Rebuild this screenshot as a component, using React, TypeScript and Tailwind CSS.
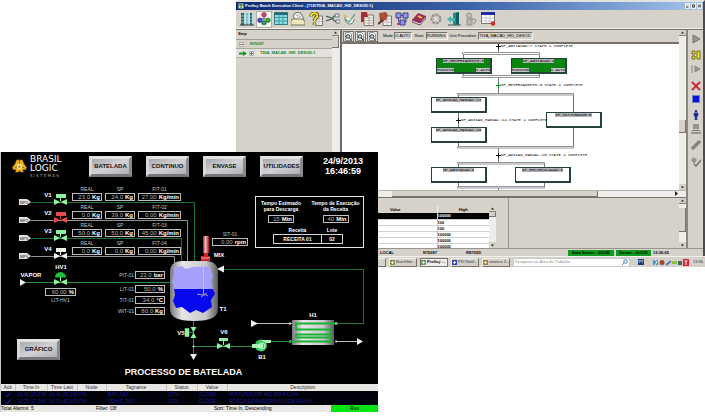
import { ReactNode } from "react";
import clsx from "clsx";

const GREEN = "#25923f";
const LIGHT_GREEN = "#8df2a0";

export default function App(): JSX.Element {
  return (
    <main className="relative min-h-screen overflow-hidden bg-white font-['Liberation_Sans',sans-serif]">
      <BatchClientWindow />
      <ProcessWindow />
    </main>
  );
}

/* ---------- Batch execution client ---------- */

function BatchClientWindow(): JSX.Element {
  return (
    <section className="absolute left-[236px] right-0 top-0 text-[4px] leading-[6px] text-black">
      <div className="border-r-2 border-t-2 border-[#4c4c50] border-t-[#e4e2de] bg-[#d6d2ca]">
        <header className="flex h-[8px] items-center justify-between bg-linear-to-r from-[#0c2a72] via-[#3c62a8] to-[#a4c4ea] pl-[2px]">
          <h1 className="flex items-center gap-[1px] font-bold text-white">
            <svg className="h-[6px] w-[6px]" viewBox="0 0 6 6">
              <rect width="5" height="5" x="0.5" y="0.5" fill="#d8e0a0" />
              <path d="M1 2h4M3 1v4" stroke="#286848" />
            </svg>
            Proficy Batch Execution Client - [718\TDIA_MACAD_HID_DESOD:1]
          </h1>
          <div className="flex gap-[1px] pr-[1px]">
            {["Minimize", "Restore", "Close"].map((label, i) => (
              <button
                key={label}
                aria-label={label}
                className="h-[6px] w-[5px] border border-[#f0eeea] bg-[#d6d2ca]"
              >
                <svg className="block h-[4px] w-[3px]" viewBox="0 0 4 4">
                  <path
                    d={["M0 3.5h3", "M.5.5h3v3h-3z", "M0 0l4 4M4 0L0 4"][i]}
                    fill="none"
                    stroke="#222"
                  />
                </svg>
              </button>
            ))}
          </div>
        </header>
        <Toolbar />
        <div className="flex border-t border-[#77736c]">
          <div className="min-w-0 flex-1">
            <div className="flex h-[167px]">
              <StepTree />
              <div className="flex min-w-0 flex-1 flex-col border-l-2 border-[#6d6a65]">
                <div className="flex min-h-0 flex-1">
                  <div className="flex min-w-0 flex-1 flex-col">
                    <ModeBar />
                    <SequenceChart />
                  </div>
                  <ScrollBar thumb="mt-[84px] h-[13px]" />
                </div>
                <div className="flex h-[7px] border-t border-[#b7b3ac] bg-[#efede9]">
                  <div className="ml-[50px] w-[206px] border-b border-r border-[#77736c] bg-[#d6d2ca]" />
                  <span className="ml-auto mr-[7px]">
                    <Arrow d="M1 0l3 2.5L1 5z" />
                  </span>
                </div>
              </div>
            </div>
            <ParameterPane />
          </div>
          <SideBar />
        </div>
        <footer className="flex h-[8px] items-center border-t border-[#9a968f] pl-[144px] font-bold">
          <span className="w-[43px]">LOCAL</span>
          <span className="w-[43px]">N70097</span>
          <span className="w-[43px]">RE705D</span>
          <div className="ml-auto mr-[34px] flex gap-[2px]">
            <span className="w-[46px] bg-[#129a22] text-center">
              Data Server - GOOD
            </span>
            <span className="w-[35px] bg-[#129a22] text-center">
              Server - GOOD
            </span>
            <span>13:36:05</span>
          </div>
        </footer>
      </div>
      <TaskBar />
    </section>
  );
}

const TOOLS: { name: string; icon: ReactNode }[] = [
  {
    name: "Batch list",
    icon: (
      <>
        <path d="M1 1h12v12H1z" fill="#b4dde0" />
        <path d="M1 1h3v12H1zM10 1h2v12h-2z" fill="#2a6670" />
        <path d="M6.500 1h1v12h-1z" fill="#4f949c" />
        <path d="M1 4h12M1 7h12M1 10h12" stroke="#bfe8ec" strokeWidth=".7" />
        <path d="M0 13h14" stroke="#333" />
      </>
    ),
  },
  {
    name: "Sequence view",
    icon: (
      <>
        <path d="M7 4v4M3 8l4-2 4 2" fill="none" stroke="#555" strokeWidth=".8" />
        <path d="M7 0l2.500 1.200v3L7 5.500 4.500 4.200v-3z" fill="#c2306e" />
        <path d="M3 5.500l2.500 1.300v3L3 11 .5 9.800v-3z" fill="#3540b8" />
        <path d="M11 5.500l2.500 1.300v3L11 11 8.500 9.800v-3z" fill="#27963a" />
        <path d="M7 8l2.500 1.300v3L7 13.500l-2.500-1.200v-3z" fill="#2d8050" />
        <path d="M7 1.500v2M3 7v2M11 7v2M7 9.500v2" stroke="#fff" strokeWidth=".6" opacity=".5" />
      </>
    ),
  },
  {
    name: "Table view",
    icon: (
      <>
        <path d="M.5.500h13v12H.5z" fill="#8fdce2" stroke="#2c7d86" />
        <path d="M.5 2h13" stroke="#1c6872" strokeWidth="2" />
        <path d="M5 2v10M9 2v10M1 5.500h12M1 9h12" stroke="#3d9aa2" />
      </>
    ),
  },
  {
    name: "Event journal",
    icon: (
      <>
        <path d="M4 1l5-1 4 7-8 2-3-5z" fill="#f6f6f2" stroke="#666" />
        <path d="M5 3.500l4-1M6 5.500l4-1" stroke="#888" strokeWidth=".7" />
        <path d="M0 8l2-1h9l3 2v4H0z" fill="#ede9bd" stroke="#77735a" />
      </>
    ),
  },
  {
    name: "Prompts",
    icon: (
      <>
        <path d="M6 4h7.500v9.500H6z" fill="#f5f5f5" stroke="#777" />
        <path d="M7 7h6M7 9.500h6M10 4v9" stroke="#aaa" strokeWidth=".7" />
        <path
          d="M2 4.500C2 0 9 .5 8.500 4 8 6 5.500 6 5.500 9M5.500 10.500v2.500"
          fill="none"
          stroke="#3c3a12"
          strokeWidth="3.500"
        />
        <path
          d="M2 4.500C2 0 9 .5 8.500 4 8 6 5.500 6 5.500 9M5.500 10.500v2.500"
          fill="none"
          stroke="#f2e32e"
          strokeWidth="2"
        />
      </>
    ),
  },
  {
    name: "Bindings",
    icon: (
      <>
        <path d="M0 4l6 2 5-4M0 9l6-2 6 4" fill="none" stroke="#4a5a58" strokeWidth="1.300" />
        <path d="M9 2h4v3H9zM10 8h4v3h-4z" fill="#e8eeee" stroke="#546462" strokeWidth=".8" />
        <path d="M5 5h3v3H5z" fill="#5d7f78" />
      </>
    ),
  },
  {
    name: "Signatures",
    icon: (
      <>
        <path d="M2 5c0 9 9 9 9 2" fill="#e9efe8" stroke="#5b7b6c" />
        <path d="M2 7l4 3 6-8" fill="none" stroke="#58977c" strokeWidth="1.200" />
        <path d="M1 3l3 2" stroke="#e0b638" strokeWidth="1.500" />
      </>
    ),
  },
  {
    name: "Alarm report",
    icon: (
      <>
        <path d="M4 3h9.500v10.500H4z" fill="#f7f4f2" stroke="#8f6f6f" />
        <path d="M5 6h8M5 8.500h8M5 11h8M9 4v9" stroke="#b39a9a" strokeWidth=".8" />
        <path d="M1 0h6l1 5H4v5H1z" fill="#a42d36" />
      </>
    ),
  },
  {
    name: "Unit report",
    icon: (
      <>
        <path d="M5 4h8.500v9.500H5z" fill="#f7f4f2" stroke="#777" />
        <path d="M6 7h7M6 10h7M9 5v8" stroke="#aaa" strokeWidth=".8" />
        <path d="M1 1l7-1 2 3-2 5-6 2z" fill="#aa5034" />
        <path d="M0 12l5-4" stroke="#5a2f26" strokeWidth="2" />
      </>
    ),
  },
  {
    name: "Arbitration",
    icon: (
      <>
        <path d="M1 1h5v5H1zM8 1h5v5H8zM5 8h5v5H5z" fill="#8b9ae4" stroke="#4b3a86" />
        <path d="M3.500 6v4H6M11 6v4H9M6 3.500h2" fill="none" stroke="#4b3a86" />
        <path d="M2 12h3" stroke="#b83b52" strokeWidth="2" />
      </>
    ),
  },
  {
    name: "Help",
    icon: (
      <>
        <path d="M0 8l6-7 8 3-6 7z" fill="#a22857" />
        <path d="M0 8v2l8 3 6-7V4l-6 7z" fill="#f0e6ea" stroke="#571b40" strokeWidth=".8" />
        <path d="M6 4l4 2" stroke="#eed94c" strokeWidth="1.500" />
      </>
    ),
  },
  {
    name: "Clear failures",
    icon: (
      <>
        <circle cx="7" cy="7" r="4.500" fill="#c5c1ba" stroke="#94918b" strokeWidth="2" strokeDasharray="3 1" />
        <path d="M5 5l4 4M9 5L5 9" stroke="#eee" />
      </>
    ),
  },
  {
    name: "Exit",
    icon: (
      <>
        <path d="M6 1l6-1v13H6z" fill="#238b8b" />
        <path d="M9 1l3-1v13l-3-2z" fill="#115d66" />
        <path d="M0 7l4-3v2h4v3H4v2z" fill="#48b8ac" />
        <path d="M1 13h13" stroke="#3b5658" />
      </>
    ),
  },
  {
    name: "Acquire",
    icon: (
      <>
        <circle cx="5" cy="3.500" r="2.500" fill="#c5c1ba" stroke="#918d87" />
        <path d="M3 7h5v6H3z" fill="#bbb7b0" stroke="#918d87" />
        <path d="M7 6l5 2-2 4" fill="none" stroke="#918d87" />
      </>
    ),
  },
  {
    name: "Active steps",
    icon: (
      <>
        <path d="M.5.500h13v11H.5z" fill="#fff" stroke="#777" />
        <path d="M0 0h14v3H0z" fill="#1e2aa6" />
        <path d="M1 6h12M1 9h12M5 3v8M9 3v8" stroke="#bbb" strokeWidth=".8" />
        <circle cx="12" cy="11.500" r="2.300" fill="#e0252c" />
      </>
    ),
  },
];

function Toolbar(): JSX.Element {
  return (
    <nav className="flex h-[19px] items-center gap-[1px] border-b border-[#f4f2ee] pl-[3px]">
      {TOOLS.map((tool, i) => (
        <button
          key={tool.name}
          aria-label={tool.name}
          className={clsx(
            "flex h-[17px] w-[16px] shrink-0 items-center justify-center",
            i === 1 && "border border-[#b3afa8] bg-[#f5f4f1]",
            i % 4 === 3 && "mr-[1px]"
          )}
        >
          <svg className="h-[14px] w-[14px] shrink-0" viewBox="0 0 14 14">
            {tool.icon}
          </svg>
        </button>
      ))}
    </nav>
  );
}

function Arrow({ d }: { d: string }): JSX.Element {
  return (
    <svg className="block h-[5px] w-[5px]" viewBox="0 0 5 5">
      <path d={d} fill="#222" />
    </svg>
  );
}

function ScrollBar({ thumb }: { thumb: string }): JSX.Element {
  return (
    <div className="flex w-[7px] shrink-0 flex-col items-center justify-between bg-[#efede9]">
      <div className="flex w-full flex-col items-center">
        <div className="flex h-[6px] w-full items-center justify-center border-b border-[#8b8780] bg-[#d6d2ca]">
          <Arrow d="M1 3.500l1.500-2L4 3.500z" />
        </div>
        <div
          className={clsx(
            "w-full border-b border-r border-[#77736c] bg-[#d6d2ca]",
            thumb
          )}
        />
      </div>
      <div className="flex h-[6px] w-full items-center justify-center bg-[#d6d2ca]">
        <Arrow d="M1 1.500h3l-1.500 2z" />
      </div>
    </div>
  );
}

function StepTree(): JSX.Element {
  return (
    <div className="flex w-[104px] shrink-0 border-r border-[#efede9]">
      <div className="min-w-0 flex-1 whitespace-nowrap font-bold text-[#15811d]">
        <div className="h-[10px] border-b border-[#a09c95] pl-[2px] pt-[1px] text-black">
          Step
        </div>
        <div className="flex h-[9px] items-center border-b border-[#aaa69f] pl-[3px]">
          <TreeToggle open />
          <span className="pl-[6px]">N70097</span>
        </div>
        <div className="flex h-[9px] items-center border-b border-[#b7b3ac] bg-[#e4e2dd] pl-[3px]">
          <svg className="h-[5px] w-[8px]" viewBox="0 0 8 5">
            <path d="M0 1.500h4V0l4 2.500L4 5V3.500H0z" fill="#15962a" />
          </svg>
          <span className="pl-[2px]">
            <TreeToggle />
          </span>
          <span className="pl-[6px]">TDIA_MACAD_HID_DESOD:1</span>
        </div>
      </div>
      <ScrollBar thumb="h-[12px]" />
    </div>
  );
}

function TreeToggle({ open }: { open?: boolean }): JSX.Element {
  return (
    <svg className="h-[5px] w-[5px]" viewBox="0 0 5 5">
      <path d="M.5.500h4v4h-4z" fill="#f4f2ee" stroke="#9a968f" strokeWidth=".7" />
      <path d={open ? "M1 2.500h3" : "M1 2.500h3M2.500 1v3"} stroke="#444" strokeWidth=".7" />
    </svg>
  );
}

function ModeBar(): JSX.Element {
  return (
    <div className="flex h-[14px] shrink-0 items-center whitespace-nowrap border-b-2 border-[#77736c] pl-[1px]">
      {["Zoom in", "Zoom out", "Zoom fit"].map((label) => (
        <button
          key={label}
          aria-label={label}
          className="mr-[1px] h-[11px] w-[11px] border border-[#77736c] bg-[#e4e2dd]"
        >
          <svg className="block h-[9px] w-[9px]" viewBox="0 0 8 9">
            <path d="M1 .5h4l2 2v6H1z" fill="#fff" stroke="#777" strokeWidth=".8" />
            <circle cx="3.500" cy="4.500" r="1.800" fill="#b8dce4" stroke="#222" strokeWidth=".9" />
            <path d="M5 6l2 2.500" stroke="#222" />
          </svg>
        </button>
      ))}
      <span className="ml-[4px] w-[11px]">Mode</span>
      <Readout>O-AUTO</Readout>
      <span className="mx-[2px]">State</span>
      <Readout>RUNNING</Readout>
      <span className="mx-[2px]">Unit Procedure</span>
      <Readout>TDIA_MACAD_HID_DESOD</Readout>
    </div>
  );
}

function Readout({ children }: { children: ReactNode }): JSX.Element {
  return (
    <span className="border border-b-[#f4f2ee] border-l-[#77736c] border-r-[#f4f2ee] border-t-[#77736c] pr-[1px]">
      {children}
    </span>
  );
}

const OPERATIONS = [
  { name: "OP_RESFRIAMENTO:3", x: 94, y: 14, running: true },
  { name: "OP_AGITACAO:4", x: 169, y: 14, running: true },
  { name: "OP_ADICAO_MANUAL:14", x: 89, y: 53 },
  { name: "OP_MISTURADOR:5", x: 204, y: 68 },
  { name: "OP_ADICAO_MANUAL:15", x: 89, y: 83 },
  { name: "OP_AGITACAO:8", x: 89, y: 123 },
  { name: "OP_RECIRCULACAO:6", x: 173, y: 123 },
];

const TRANSITIONS = [
  { text: "OP_AGITACAO:7.STATE = COMPLETE", x: 156, y: 2 },
  { text: "OP_RESFRIAMENTO:3.STATE = COMPLETE", x: 156, y: 41, active: true },
  { text: "OP_ADICAO_MANUAL:14.STATE = COMPLETE", x: 116, y: 76 },
  { text: "OP_ADICAO_MANUAL:15.STATE = COMPLETE", x: 156, y: 111 },
];

function SequenceChart(): JSX.Element {
  return (
    <div className="relative min-h-0 flex-1 overflow-hidden bg-white font-['Liberation_Mono',monospace] leading-[4px]">
      <svg className="absolute left-0 top-0 h-[146px] w-[336px]" viewBox="0 0 336 146">
        <path
          d="M156.500 0v8M121.500 11v23M197.500 11v23M156.500 34v16M116.500 50v53M231.500 50v53M156.500 103v16M116.500 119v24M202.500 119v24M156.500 143v3"
          stroke="#77777b"
        />
        <g fill="#fff" stroke="#96969a">
          <path d="M120.500 8.500h77v2h-77zM120.500 31.500h77v2h-77z" />
          <path d="M115.500 49.500h116v1.500h-116zM115.500 102.500h116v1.500h-116z" />
          <path d="M115.500 118.500h87v1.500h-87zM115.500 142.500h87v1.500h-87z" />
        </g>
        {TRANSITIONS.map((t) => (
          <path
            key={t.text}
            d={`M${t.x - 2} ${t.y + 0.5}h5M${t.x + 0.5} ${t.y - 2}v5`}
            stroke={t.active ? "#0f8c23" : "#111"}
          />
        ))}
      </svg>
      {OPERATIONS.map((op) => (
        <div
          key={op.name}
          className={clsx(
            "absolute flex h-[16px] w-[56px] flex-col items-center justify-between border border-b-2 border-r-2 border-[#26403c]",
            op.running ? "bg-[#0a850f]" : "bg-white"
          )}
          style={{ left: op.x, top: op.y }}
        >
          <span className="bg-[#b6b6ba]">{op.name}</span>
          {op.running && (
            <div className="flex w-full justify-between">
              <span className="bg-[#c6c6ca]">RUNNING</span>
              <span className="bg-[#c6c6ca]">O-AUTO</span>
            </div>
          )}
        </div>
      ))}
      {TRANSITIONS.map((t) => (
        <span
          key={t.text}
          className="absolute whitespace-nowrap"
          style={{ left: t.x + 3, top: t.y - 2 }}
        >
          {t.text}
        </span>
      ))}
    </div>
  );
}

function ParameterPane(): JSX.Element {
  return (
    <div className="flex h-[51px] overflow-hidden border-t border-[#77736c]">
      <div className="flex w-[273px] border-r border-[#9a968f] pl-[40px] pt-[8px]">
        <table className="w-[213px] table-fixed border-collapse bg-white font-bold">
          <thead>
            <tr className="h-[7px] bg-[#d6d2ca]">
              <th className="w-[78px] p-0">Name</th>
              <th className="w-[83px] p-0">Value</th>
              <th className="border-l border-[#f4f2ee] p-0">High</th>
            </tr>
          </thead>
          <tbody>
            {["100000", "100", "100", "100000", "100000", "100000"].map(
              (high, i) => (
                <tr
                  key={i}
                  className={clsx(
                    "h-[6px] border-b border-[#d0d0d0]",
                    i === 0 && "bg-black text-white"
                  )}
                >
                  <td className="p-0" />
                  <td className="p-0" />
                  <td className="border-l border-[#c8c8c8] p-0 leading-[5px]">
                    {high}
                  </td>
                </tr>
              )
            )}
          </tbody>
        </table>
        <ScrollBar thumb="h-[5px]" />
      </div>
      <div className="flex flex-1 justify-end">
        <ScrollBar thumb="mt-[4px] h-[24px]" />
      </div>
    </div>
  );
}

const SIDE_TOOLS: { name: string; icon: ReactNode; gap: string }[] = [
  {
    name: "Start",
    gap: "mt-[4px]",
    icon: <path d="M2 1l7 4-7 4z" fill="#9a9791" stroke="#77736c" />,
  },
  {
    name: "Hold",
    gap: "mt-[6px]",
    icon: (
      <path d="M1 1h3v3H1zM1 6h3v3H1zM6 1h3v8H6z" fill="#f6e92a" stroke="#69641d" />
    ),
  },
  {
    name: "Restart",
    gap: "mt-[4px]",
    icon: <path d="M1 1v8M4 2l5 3-5 3z" fill="#9a9791" stroke="#8b8780" />,
  },
  {
    name: "Abort",
    gap: "mt-[7px]",
    icon: <path d="M1 1l8 8M9 1L1 9" stroke="#c62b34" strokeWidth="2" />,
  },
  {
    name: "Stop",
    gap: "mt-[3px]",
    icon: <path d="M1.500 1.500h7v7h-7z" fill="#0a12e0" stroke="#6c82c4" />,
  },
  {
    name: "Manual",
    gap: "mt-[6px]",
    icon: (
      <>
        <circle cx="5" cy="1.200" r="1.200" fill="#1d2a94" />
        <path d="M3 3h4v3H6v4H5.300V7h-.6v3H4V6H3z" fill="#1d2a94" stroke="#1d2a94" strokeWidth=".5" />
      </>
    ),
  },
  {
    name: "Computer",
    gap: "mt-[4px]",
    icon: (
      <>
        <path d="M2 0h6v5H2zM0 8h10v2H0z" fill="#98948e" />
        <path d="M1 6.500h8" stroke="#77736c" />
      </>
    ),
  },
  {
    name: "Single step",
    gap: "mt-[6px]",
    icon: <path d="M2 8l6-6" stroke="#88847e" strokeWidth="3.500" strokeLinecap="round" />,
  },
  {
    name: "Clear",
    gap: "mt-[7px]",
    icon: (
      <>
        <path d="M0 3l3-3 3 3-3 4z" fill="#98948e" />
        <path d="M3 7l2 2 5-6" fill="none" stroke="#77736c" strokeWidth="1.500" />
      </>
    ),
  },
];

function SideBar(): JSX.Element {
  return (
    <nav className="flex w-[17px] shrink-0 flex-col items-center border-l-2 border-[#8b8780]">
      {SIDE_TOOLS.map((tool) => (
        <button
          key={tool.name}
          aria-label={tool.name}
          className={clsx("h-[10px] w-[10px] shrink-0", tool.gap)}
        >
          <svg className="block h-[10px] w-[10px]" viewBox="0 0 10 10">
            {tool.icon}
          </svg>
        </button>
      ))}
    </nav>
  );
}

function TaskBar(): JSX.Element {
  return (
    <div className="flex h-[11px] items-center gap-[3px] border-t border-[#f4f2ee] bg-[#d6d2ca] pl-[122px] text-[#333]">
      {["Inbox ...", "BatchSer...", "Proficy ...", "PDI Notif...", "sinotico 3..."].map(
        (label, i) => (
          <button
            key={label}
            className={clsx(
              "flex h-[9px] w-[28px] shrink-0 items-center gap-[1px] overflow-hidden whitespace-nowrap border",
              i === 2
                ? "border-[#77736c] bg-[#efede9] font-bold text-black"
                : "border-b-[#77736c] border-l-[#f4f2ee] border-r-[#77736c] border-t-[#f4f2ee]"
            )}
          >
            <svg className="h-[5px] w-[5px] shrink-0" viewBox="0 0 5 5">
              <path
                d="M0 0h5v5H0z"
                fill={["#4b74b8", "#80923a", "#6c9a5c", "#2a45a8", "#a3833a"][i]}
              />
              <path d="M1 2.500h3M2.500 1v3" stroke="#e8ecd8" />
            </svg>
            {label}
          </button>
        )
      )}
      <div className="flex h-[9px] min-w-0 flex-1 items-center border border-[#c8c8c8] bg-white">
        <input
          aria-label="Pesquisar"
          placeholder="Pesquisar na Área de Trabalho"
          className="min-w-0 flex-1 pl-[1px] placeholder:text-[#888]"
        />
        <svg className="mr-[1px] h-[6px] w-[6px]" viewBox="0 0 6 6">
          <circle cx="3.500" cy="2.500" r="1.800" fill="#dceaf6" stroke="#5888bc" />
          <path d="M2 4L0 6" stroke="#5888bc" />
        </svg>
      </div>
      <span className="mx-[5px] w-[6px] bg-[#1d3d80] text-center text-white">
        PT
      </span>
      <svg className="h-[7px] w-[38px] shrink-0" viewBox="0 0 38 7">
        <path d="M1 1h5v5H1z" fill="#4a9ac8" />
        <path d="M2 0l3 3-2 3" stroke="#e8f4fa" fill="none" />
        <circle cx="10" cy="3.500" r="2.500" fill="#9c4a2c" />
        <path d="M14 6l5-4" stroke="#4a7cc0" strokeWidth="2" />
        <path d="M20 2h5v3h-5z" fill="#8dc13c" />
        <path d="M26 2h4v4h-4z" fill="#4c6468" />
        <path d="M31 0h6v7h-6z" fill="#d3232c" />
        <path d="M32.500 2h3M34 2v4" stroke="#fff" />
      </svg>
      <span className="pr-[2px]">13:36</span>
    </div>
  );
}

/* ---------- Process supervision screen ---------- */

function ProcessWindow(): JSX.Element {
  return (
    <section className="absolute left-0 top-[152px] w-[378px] border-l border-[#c8c8c8] bg-black text-[6px] leading-[7px] text-white">
      <header className="flex h-[28px] items-center">
        <Logo />
        <div className="flex gap-[14px] pl-[17px]">
          <PanelButton>BATELADA</PanelButton>
          <PanelButton>CONTINUO</PanelButton>
          <PanelButton>ENVASE</PanelButton>
          <PanelButton>UTILIDADES</PanelButton>
        </div>
        <p className="ml-auto mr-[15px] text-center text-[9px] font-bold leading-[10px]">
          24/9/2013
          <br />
          16:46:59
        </p>
      </header>
      <ProcessDiagram />
      <h2 className="pr-[12px] text-center text-[9px] font-bold leading-[24px]">
        PROCESSO DE BATELADA
      </h2>
      <AlarmTable />
    </section>
  );
}

function Logo(): JSX.Element {
  return (
    <div className="flex w-[71px] items-center gap-[3px] pl-[11px]">
      <svg className="h-[16px] w-[15px] shrink-0" viewBox="0 0 16 16">
        <path
          d="M5 1.500h2.500v2h1V1.500H11l1.500 4 3 4-1.200 2.500-2-.5-1 1.500 1 1.500H9.500L8 13l-1.500 1.500H3.500l1-1.500-1-1.500-2 .5L.5 9.500l3-4z"
          fill="#f2b21c"
          stroke="#c98a10"
          strokeWidth=".6"
        />
        <circle cx="8" cy="8.500" r="2.800" fill="#fff0a0" />
        <path d="M8 6.700l1.600 2.800H6.400z" fill="#a8690e" />
        <path d="M8 3v2.500M3 10l2.500-1M13 10l-2.500-1" stroke="#6d470a" strokeWidth=".8" />
      </svg>
      <div className="pt-[1px] font-['DejaVu_Sans',sans-serif] text-[9px] leading-[9px]">
        <div>BRASIL</div>
        <div>LOGIC</div>
        <div className="text-[4px] leading-[5px] text-[#a8a8a8]">
          S I S T E M A S
        </div>
      </div>
    </div>
  );
}

function PanelButton({ children }: { children: ReactNode }): JSX.Element {
  return (
    <button className="flex h-[21px] w-[43px] items-center justify-center border-3 border-b-[#77777a] border-l-[#d8d8da] border-r-[#8b8b8e] border-t-[#e2e2e4] bg-linear-to-br from-[#a8a8ac] via-[#d2d2d6] to-[#b0b0b4] text-[6px] font-bold text-[#111]">
      {children}
    </button>
  );
}

const FEEDS = [
  { id: 1, y: 202, real: "23,0", sp: "24,0", flow: "27,00", color: LIGHT_GREEN, line: GREEN, end: 194 },
  { id: 2, y: 220, real: "0,0", sp: "39,0", flow: "0,00", color: "#e8494f", line: "#b9b9b9", end: 187 },
  { id: 3, y: 238, real: "50,0", sp: "50,0", flow: "45,00", color: LIGHT_GREEN, line: GREEN, end: 181 },
  { id: 4, y: 256, real: "0,0", sp: "0,0", flow: "0,00", color: "#f4f4f4", line: "#b9b9b9", end: 174 },
];

const TANK_READINGS = [
  { tag: "PIT-01", value: "23,0", unit: "bar", y: 271 },
  { tag: "LIT-01", value: "50,0", unit: "%", y: 285 },
  { tag: "TIT-01", value: "34,0", unit: "°C", y: 296 },
  { tag: "WIT-01", value: "80,0", unit: "Kg", y: 307 },
];

const EQUIPMENT = [
  { text: "HV1", x: 60, y: 267 },
  { text: "VAPOR", x: 30, y: 275 },
  { text: "MIX", x: 218, y: 255 },
  { text: "T1", x: 222, y: 309 },
  { text: "H1", x: 312, y: 315 },
  { text: "V5", x: 180, y: 333 },
  { text: "V6", x: 223, y: 332 },
  { text: "B1", x: 261, y: 357 },
];

// The diagram starts 180px down the screen, so plant coordinates are shifted by it.
const ORIGIN_Y = 180;

function Label(props: {
  x: number;
  y: number;
  children: ReactNode;
}): JSX.Element {
  return (
    <span
      className="absolute -translate-x-1/2 -translate-y-1/2 whitespace-nowrap font-bold"
      style={{ left: props.x, top: props.y - ORIGIN_Y }}
    >
      {props.children}
    </span>
  );
}

function ValueBox(props: { value: string; unit: string }): JSX.Element {
  return (
    <span className="flex h-[8px] w-full items-center justify-end gap-[2px] border border-[#bdbdbd] bg-black pr-[1px] leading-[6px]">
      <span className="text-[#b4b4b4]">{props.value}</span>
      <b>{props.unit}</b>
    </span>
  );
}

function ProcessDiagram(): JSX.Element {
  return (
    <div className="relative h-[180px]">
      <PlantDrawing />
      {FEEDS.map((feed) => (
        <div key={feed.id}>
          <Label x={47} y={feed.y - 7}>
            V{feed.id}
          </Label>
          <div
            className="absolute left-[71px] flex gap-[3px] text-center"
            style={{ top: feed.y - 16 - ORIGIN_Y }}
          >
            <Reading label="REAL" value={feed.real} unit="Kg" width="w-[30px]" />
            <Reading label="SP" value={feed.sp} unit="Kg" width="w-[30px]" />
            <Reading
              label={`FIT-0${feed.id}`}
              value={feed.flow}
              unit="Kg/min"
              width="w-[43px]"
            />
          </div>
        </div>
      ))}
      {TANK_READINGS.map((r) => (
        <div
          key={r.tag}
          className="absolute left-[114px] flex w-[50px] items-center gap-[1px]"
          style={{ top: r.y - ORIGIN_Y }}
        >
          <span className="w-[19px] shrink-0 text-right text-[5px] text-[#c4c4c4]">
            {r.tag}
          </span>
          <ValueBox value={r.value} unit={r.unit} />
        </div>
      ))}
      {EQUIPMENT.map((e) => (
        <Label key={e.text} x={e.x} y={e.y}>
          {e.text}
        </Label>
      ))}
      <div className="absolute left-[44px] top-[108px] w-[31px] text-center text-[6px]">
        <ValueBox value="60,00" unit="%" />
        <div className="pt-[1px] text-[5px] text-[#c4c4c4]">LIT-HV1</div>
      </div>
      <div className="absolute left-[211px] top-[51px] text-center">
        <Reading label="SIT-01" value="0,00" unit="rpm" width="w-[36px]" />
      </div>
      <RecipePanel />
      <div className="absolute left-[16px] top-[159px]">
        <PanelButton>GRÁFICO</PanelButton>
      </div>
    </div>
  );
}

function Reading(props: {
  label: string;
  value: string;
  unit: string;
  width: string;
}): JSX.Element {
  return (
    <div className={props.width}>
      <div className="text-[5px] text-[#c4c4c4]">{props.label}</div>
      <ValueBox value={props.value} unit={props.unit} />
    </div>
  );
}

function RecipePanel(): JSX.Element {
  return (
    <div className="absolute left-[254px] top-[16px] w-[109px] border border-[#e6e6e6] bg-black py-[3px] text-[5px] font-bold leading-[6px]">
      <div className="flex justify-between px-[3px] text-center">
        <div className="flex w-[44px] flex-col items-center gap-[3px]">
          <span className="whitespace-nowrap">
            Tempo Estimado
            <br />
            para Descarga
          </span>
          <span className="w-[26px] text-[6px] font-normal">
            <ValueBox value="15" unit="Min" />
          </span>
        </div>
        <div className="flex w-[49px] flex-col items-center gap-[3px]">
          <span className="whitespace-nowrap">
            Tempo de Execução
            <br />
            da Receita
          </span>
          <span className="w-[26px] text-[6px] font-normal">
            <ValueBox value="40" unit="Min" />
          </span>
        </div>
      </div>
      <table className="ml-[17px] mt-[4px] border-collapse text-center">
        <thead>
          <tr>
            <th className="w-[48px] p-0 pb-[1px]">Receita</th>
            <th className="w-[21px] p-0 pb-[1px]">Lote</th>
          </tr>
        </thead>
        <tbody>
          <tr className="h-[9px]">
            <td className="border border-[#d6d6d6] p-0">RECEITA 01</td>
            <td className="border border-[#d6d6d6] p-0">02</td>
          </tr>
        </tbody>
      </table>
    </div>
  );
}

function Valve({ x, y, color }: { x: number; y: number; color: string }): JSX.Element {
  return (
    <path
      d={`M${x - 6.5} ${y - 3}l6.500 3-6.500 3zM${x + 6.5} ${y - 3}l-6.500 3 6.500 3z`}
      fill={color}
    />
  );
}

function PlantDrawing(): JSX.Element {
  return (
    <svg
      className="absolute left-[-1px] top-0 h-[180px] w-[378px]"
      viewBox="0 180 378 180"
      fill="none"
    >
      <defs>
        <linearGradient id="steel">
          <stop offset="0" stopColor="#77777b" />
          <stop offset=".25" stopColor="#e6e6e8" />
          <stop offset=".75" stopColor="#c8c8cb" />
          <stop offset="1" stopColor="#59595d" />
        </linearGradient>
        <linearGradient id="motor">
          <stop offset="0" stopColor="#a40e14" />
          <stop offset=".4" stopColor="#f6c6c6" />
          <stop offset="1" stopColor="#a40e14" />
        </linearGradient>
      </defs>

      {FEEDS.map((feed) => (
        <g key={feed.id}>
          <path d={`M31 ${feed.y + 0.5}H${feed.end + 0.5}V264`} stroke={feed.line} strokeWidth=".8" />
          <path d={`M19 ${feed.y - 3}h8l4 3-4 3h-8z`} fill="#e0e0e0" />
          <text
            x="20"
            y={feed.y + 2}
            fill="#222"
            fontSize="4"
            fontFamily="Liberation Sans, sans-serif"
          >
            MP{feed.id}
          </text>
          <rect x="56" y={feed.y - 8} width="10" height="4" fill={feed.color} />
          <path d={`M60.500 ${feed.y - 5}v4`} stroke={feed.color} />
          <Valve x={60.5} y={feed.y} color={feed.color} />
        </g>
      ))}

      {/* steam inlet */}
      <path d="M26 282.500h146" stroke={GREEN} />
      <path d="M20 279l6 3.500-6 3.500z" fill="#eee" />
      <path d="M55 277.500a5.500 5.500 0 0 1 11 0z" fill="#1cc23a" />
      <path d="M60.500 277v4" stroke={LIGHT_GREEN} />
      <Valve x={60.5} y={282} color={LIGHT_GREEN} />

      {/* tank and mixer */}
      <path
        d="M170 271c0-7 6-10 12-10h24c7 0 12 4 12 10v38c0 8-7 12-24 12s-24-4-24-12z"
        fill="url(#steel)"
      />
      <path d="M174 268l8-2 4 3 7-2h8l4-1 5 2 3 8-2 6 2 7h-39l-2-8 2-5z" fill="#a6a0fa" />
      <path d="M174 289h39l2 5-4 6 1 7-9 6-7-3-6 3-8-6-6 1-3-7 2-6z" fill="#0608ee" />
      <path d="M203.500 262v32" stroke="#c8c8e8" strokeWidth=".8" />
      <path d="M197 294l5 1 2-1 4 2M201 297l6-4" stroke="#a0a0a0" />
      <rect x="203" y="236" width="6" height="17" fill="url(#motor)" />
      <path d="M204 253h4v3h2v5h-9v-5h3z" fill="#d22027" />
      <path d="M201 258h9" stroke="#f2aaaa" />

      {/* return loop through the exchanger */}
      <path d="M224 269.500h139.500v54H336" stroke={GREEN} strokeWidth=".8" />
      <path d="M224 265.500v7l-7-3.500z" fill="#f0f0f0" />
      <path d="M257 323.500h35M336 341.500h21" stroke="#bbb" />
      <path d="M251 320l7 3.500-7 3.500zM357 338l6 3.500-6 3.500z" fill="#eee" />
      <rect x="292" y="320" width="42" height="25" fill="url(#steel)" />
      <path
        d="M338 323.500h-42v6h35v5h-35v3h35v4h-41"
        stroke="#14b432"
        strokeWidth="2"
      />
      <path d="M290 322v3M336 322v3M290 340v3M336 340v3" stroke="#ddd" />

      {/* drain and pump */}
      <path d="M193.500 321v33M194 346.500h60M268 341.500h24" stroke={GREEN} />
      <path d="M190 354h7l-3.500 6z" fill="#eee" />
      <path d="M190.500 327h6l-3 5.500 3 5.500h-6l3-5.500z" fill={LIGHT_GREEN} />
      <path d="M185 328.500h4v8h-4zM189 332.500h4" fill={LIGHT_GREEN} stroke={LIGHT_GREEN} strokeWidth=".5" />
      <rect x="219" y="338" width="9" height="3" fill={LIGHT_GREEN} />
      <path d="M223.500 341v4" stroke={LIGHT_GREEN} />
      <Valve x={223.5} y={346} color={LIGHT_GREEN} />
      <circle cx="193.500" cy="346.500" r="1" fill="#eee" />
      <circle cx="261" cy="345.500" r="6" fill="#35cf58" />
      <path d="M261 340h10v3h-5zM252 344h11v4h-11z" fill="#a6f5b6" />
      <circle cx="262" cy="346" r="3" stroke="#c8fad2" />
    </svg>
  );
}

const ALARMS = [
  ["16:41:25,230", "16:41:25,230", "FIX", "BAT_MIX", "CFN", "CLOSE", "MISTURADOR 460 EM FALHA"],
  ["10:25:17,040", "10:31:40,000", "FIX", "COMZ_R03", "CFN", "CLOSE", "ROSCA DOSADORA 610 EM FALHA"],
];

function AlarmTable(): JSX.Element {
  return (
    <div className="text-[5px] text-black">
      <table className="w-full table-fixed border-collapse leading-[7px]">
        <thead className="bg-[#e9e7e4] text-[#333]">
          <tr>
            <th className="w-[14px] p-0 font-normal">Ack</th>
            <th className="w-[32px] border-l border-[#c4c2be] p-0 font-normal">Time In</th>
            <th className="w-[30px] border-l border-[#c4c2be] p-0 font-normal">Time Last</th>
            <th className="w-[29px] border-l border-[#c4c2be] p-0 font-normal">Node</th>
            <th className="w-[60px] border-l border-[#c4c2be] p-0 font-normal">Tagname</th>
            <th className="w-[31px] border-l border-[#c4c2be] p-0 font-normal">Status</th>
            <th className="w-[30px] border-l border-[#c4c2be] p-0 font-normal">Value</th>
            <th className="border-l border-[#c4c2be] p-0 font-normal">Description</th>
          </tr>
        </thead>
        <tbody className="bg-[#02020a] text-[#1a1a9c]">
          {ALARMS.map((row) => (
            <tr key={row[3]}>
              <td className="p-0">
                <svg className="mx-auto block h-[5px] w-[6px]" viewBox="0 0 6 5">
                  <path d="M1 2.500l1.500 2L5.500.5" fill="none" stroke="#2424d0" />
                </svg>
              </td>
              {row.map((cell, i) => (
                <td key={i} className="whitespace-nowrap p-0 pl-[2px]">
                  {cell}
                </td>
              ))}
            </tr>
          ))}
        </tbody>
      </table>
      <div className="flex bg-[#e9e7e4] leading-[7px]">
        <span className="w-[95px]">Total Alarms: 5</span>
        <span className="w-[118px]">Filter: Off</span>
        <span className="flex-1">Sort: Time In, Descending</span>
        <span className="w-[47px] bg-[#06e313] text-center">Run</span>
      </div>
    </div>
  );
}
